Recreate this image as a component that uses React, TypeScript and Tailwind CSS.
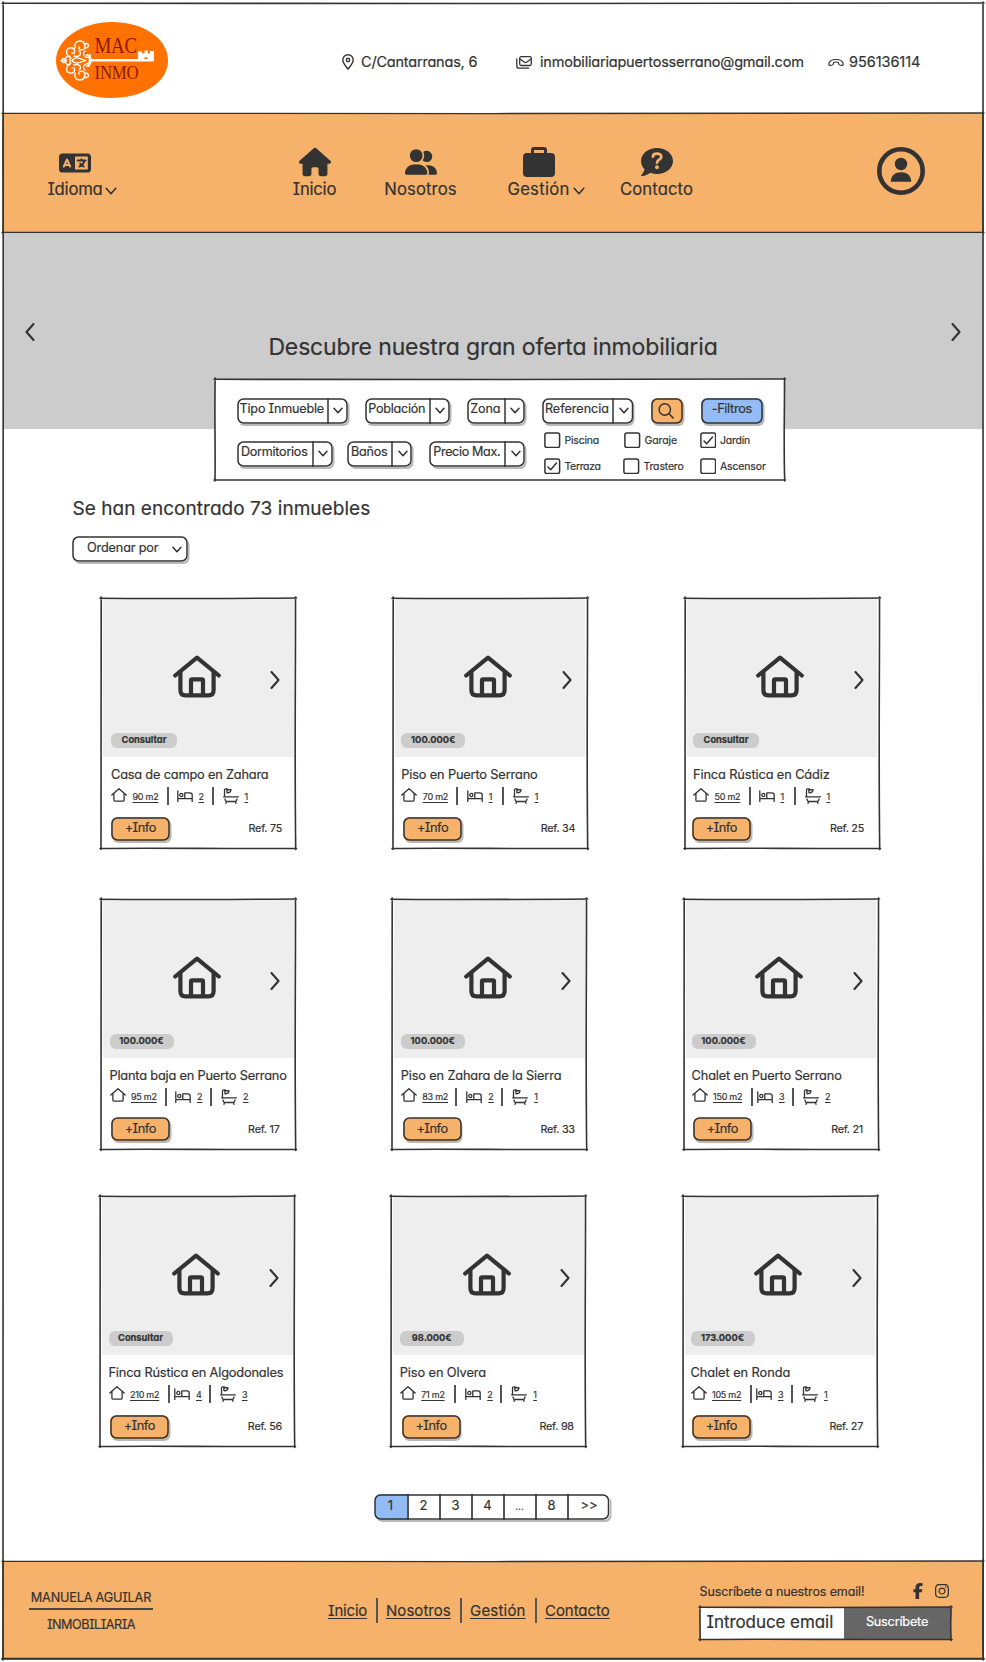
import type { ReactNode } from 'react';
import { FaFacebookF, FaHouse, FaInstagram, FaLanguage, FaUserGroup } from 'react-icons/fa6';

const INK = '#333333';

/* Hand-drawn rectangle: four slightly bowed strokes that overshoot the corners. */
function Sketch({ w, h, stroke = 1.6 }: { w: number; h: number; stroke?: number }) {
  const d = [
    `M-1 0.3 C${w * 0.3} 0.9 ${w * 0.7} 0.4 ${w + 1} 0`,
    `M${w} -1 C${w + 0.2} ${h * 0.3} ${w - 1} ${h * 0.6} ${w + 0.2} ${h + 1}`,
    `M-1 ${h} C${w * 0.25} ${h - 0.9} ${w * 0.6} ${h + 0.4} ${w + 1} ${h}`,
    `M0.2 -1 C-0.6 ${h * 0.35} 0.5 ${h * 0.7} 0 ${h + 1}`,
  ].join(' ');
  return (
    <svg
      className="pointer-events-none absolute inset-0 size-full overflow-visible"
      viewBox={`0 0 ${w} ${h}`}
      preserveAspectRatio="none"
      fill="none"
      stroke={INK}
      strokeWidth={stroke}
      strokeLinecap="round"
    >
      <path d={d} />
    </svg>
  );
}

/* Rounded pen outline laid over a control. */
function Outline() {
  return (
    <span className="pointer-events-none absolute inset-[0.75px]">
      <svg className="block size-full overflow-visible" fill="none" stroke={INK} strokeWidth="1.5">
        <rect width="100%" height="100%" rx="5.500" />
      </svg>
    </span>
  );
}

function Chevron({ className, dir = 'down', width = 1.5 }: { className: string; dir?: 'down' | 'left' | 'right'; width?: number }) {
  const paths = { down: 'M1 1 L5 5.6 L9 1', left: 'M8.5 1 L1.5 9 L8.5 17', right: 'M1.5 1 L8.5 9 L1.5 17' };
  return (
    <svg className={className} viewBox={dir === 'down' ? '0 0 10 6.6' : '0 0 10 18'} fill="none" stroke={INK} strokeWidth={width} strokeLinecap="round" strokeLinejoin="round">
      <path d={paths[dir]} />
    </svg>
  );
}

function Logo() {
  return (
    <svg className="mt-1 h-[76px] w-28 shrink-0 [-webkit-text-stroke:0px]" viewBox="0 0 112 76">
      <path d="M56 0 C88 0 112 17 112 38.500 C112 60 88 76 54 76 C24 76 0 59 0 38.500 C0 17 26 0 56 0Z" fill="#ff7100" />
      <g fill="none" stroke="#fff" strokeWidth="1.35" strokeLinecap="round">
        <circle cx="8" cy="38.500" r="2" />
        <path d="M5 38.500 H10 M10 36 C12 32 15 34 14 38.500 C15 43 12 45 10 41" />
        <path d="M15 36 C8 32 10 25 16 26 C20 27 19 33 16 31" />
        <path d="M15 41 C8 45 10 52 16 51 C20 50 19 44 16 46" />
        <path d="M19 26 C17 17 29 17 29 24 C29 29 22 29 23 25" />
        <path d="M19 51 C17 60 29 60 29 53 C29 48 22 48 23 52" />
        <path d="M28 22 C33 20 34 25 30 26 M28 55 C33 57 34 52 30 51" />
        <path d="M18 34 C24 36 26 31 23 29 M18 43 C24 41 26 46 23 48" />
        <path d="M29 29 C25 32 30 37 34 35 M29 48 C25 45 30 40 34 42" />
        <path d="M16 38.500 C20 33 26 38 30 38.500 C26 39 20 44 16 38.500Z" />
        <path d="M31 33 C36 34 36 43 31 44 M34 33 L33 44" strokeWidth="1.800" />
      </g>
      <path d="M34 37.100 L82 37.100 V29.500 H86 V31.500 H88.500 V28.500 H92 V31.500 H94 V29 H98 V39.500 H34 Z" fill="#fff" />
      <path d="M88 37 q2 -4 4 0z" fill="#ff7100" />
      <g fill="#8c1a06" fontFamily="'Liberation Serif', serif">
        <text x="38.500" y="31.300" fontSize="24" textLength="42.500" lengthAdjust="spacingAndGlyphs">MAC</text>
        <text x="38.500" y="56.700" fontSize="18.800" textLength="44" lengthAdjust="spacingAndGlyphs">INMO</text>
      </g>
    </svg>
  );
}

function PinIcon() {
  return (
    <svg className="h-4 w-3" viewBox="0 0 12 16" fill="none" stroke={INK} strokeWidth="1.4">
      <path d="M6 15.200 C4 12.500 .8 9 .8 6 A5.200 5.200 0 0 1 11.200 6 C11.200 9 8 12.500 6 15.200Z" strokeLinejoin="round" />
      <circle cx="6" cy="6" r="1.700" />
    </svg>
  );
}

function MailIcon() {
  return (
    <svg className="h-[13px] w-4" viewBox="0 0 16 13" fill="none" stroke={INK} strokeWidth="1.300" strokeLinecap="round" strokeLinejoin="round">
      <rect x="3.700" y=".7" width="11.600" height="8.800" rx="1.500" />
      <path d="M3.900 3 L8.500 6.300 Q9.500 7 10.500 6.300 L15.100 3" />
      <path d="M.8 2.800 V10 Q.8 12.200 3 12.200 H12.500" />
    </svg>
  );
}

function PhoneIcon() {
  return (
    <svg className="h-[9px] w-4" viewBox="0 0 16 9" fill="none" stroke={INK} strokeWidth="1.200" strokeLinejoin="round">
      <path d="M.9 5.300 C2.300 .2 13.700 .2 15.100 5.300 C15.500 6.700 14.900 7.600 13.700 7.400 L11.600 7 C10.400 6.700 10.600 5.300 10.400 4.500 C9 3.900 7 3.900 5.600 4.500 C5.400 5.300 5.600 6.700 4.400 7 L2.300 7.400 C1.100 7.600 .5 6.700 .9 5.300Z" />
    </svg>
  );
}

function SuitcaseIcon() {
  return (
    <svg className="h-[30px] w-8" viewBox="0 0 32 30" fill={INK}>
      <path d="M8 6 V3 A3 3 0 0 1 11 0 H21 A3 3 0 0 1 24 3 V6 H28 A4 4 0 0 1 32 10 V26 A4 4 0 0 1 28 30 H4 A4 4 0 0 1 0 26 V10 A4 4 0 0 1 4 6Z M11 6 H21 V3 H11Z" fillRule="evenodd" />
    </svg>
  );
}

function QuestionIcon() {
  return (
    <svg className="h-7 w-8" viewBox="0 32 512 448">
      <path fill={INK} d="M256 32C114.600 32 0 125.100 0 240c0 49.600 21.400 95 57 130.700C44.500 421.100 2.700 466 2.200 466.500c-2.200 2.300-2.800 5.700-1.500 8.700S4.800 480 8 480c66.300 0 116-31.800 140.600-51.400 32.700 12.300 69 19.400 107.400 19.400 141.400 0 256-93.100 256-208S397.400 32 256 32z" />
      <path d="M190 170 C195 105 330 110 325 175 C323 220 256 220 256 268" fill="none" stroke="#f6b26b" strokeWidth="44" strokeLinecap="round" />
      <circle cx="256" cy="340" r="31" fill="#f6b26b" />
    </svg>
  );
}

function AccountIcon() {
  return (
    <svg className="size-12" viewBox="0 0 48 48" fill={INK}>
      <circle cx="24" cy="24" r="21.700" fill="none" stroke={INK} strokeWidth="4.600" />
      <circle cx="24" cy="17" r="6.200" />
      <path d="M13.700 34.800 C14 28 18.500 25.200 24 25.200 S34 28 34.300 34.800Z" />
    </svg>
  );
}

function BigHouse() {
  return (
    <svg className="h-[43px] w-12" viewBox="0 0 48 43" fill="none" stroke={INK} strokeWidth="4.200" strokeLinecap="round" strokeLinejoin="round">
      <path d="M2.200 20.500 L24 2.600 L45.800 20.500" />
      <path d="M7.400 17.500 V35 Q7.400 40.400 12.500 40.400 H35.500 Q40.600 40.400 40.600 35 V17.500" />
      <path d="M18 40 V25.500 Q18 24.300 19.200 24.300 H28.800 Q30 24.300 30 25.500 V40" />
    </svg>
  );
}

function HouseIcon() {
  return (
    <svg className="-mt-[3px] h-[14px] w-4 shrink-0" viewBox="0 0 16 14" fill="none" stroke={INK} strokeWidth="1.300" strokeLinecap="round" strokeLinejoin="round">
      <path d="M.8 7 L8 .8 L15.200 7 M2.900 5.500 V12 Q2.900 13.200 4.100 13.200 H11.900 Q13.100 13.200 13.100 12 V5.500" />
    </svg>
  );
}

function BedIcon() {
  return (
    <svg className="h-3 w-4 shrink-0" viewBox="0 0 16 12" fill="none" stroke={INK} strokeWidth="1.300" strokeLinecap="round" strokeLinejoin="round">
      <path d="M.8 .8 V11.400 M.8 8.600 H15.200 V11.400 M15.200 8.600 V5 Q15.200 2.800 13 2.800 H7.800 V8.600" />
      <circle cx="4.300" cy="5" r="1.600" />
    </svg>
  );
}

function BathIcon() {
  return (
    <svg className="h-4 w-4 shrink-0" viewBox="0 0 16 16" fill="none" stroke={INK} strokeWidth="1.300" strokeLinecap="round" strokeLinejoin="round">
      <path d="M1.500 8.800 V2 Q1.500 .8 2.700 .8 H4 Q5 .8 5 2 M4 4.800 L3.800 1.800 L8 1.700 Q8 4.500 4 4.800Z M.6 8.800 H15.400 M2 11 Q2.200 13.500 4 13.500 H12 Q13.800 13.500 14 11 M3.500 13.800 L3 15.300 M12.500 13.800 L13 15.300" />
    </svg>
  );
}

function NavItem({ label, icon, caret, className }: { label: string; icon: ReactNode; caret?: boolean; className: string }) {
  return (
    <a className={`flex shrink-0 flex-col items-center text-[16.700px] ${className}`}>
      <span className="flex h-[30px] items-center justify-center">{icon}</span>
      <span className="relative mt-0.5 leading-[21px] whitespace-nowrap">
        {label}
        {caret && <Chevron className="absolute top-[8px] left-full ml-[3px] h-2 w-3" width={1.3} />}
      </span>
    </a>
  );
}

const boxed = 'relative rounded-[6px] shadow-[1.5px_2px_0_#b8b8b8]';

function Select({ label, className }: { label: string; className: string }) {
  return (
    <button className={`flex h-[25.500px] shrink-0 items-stretch bg-white text-[12.6px] ${boxed} ${className}`}>
      <span className="flex flex-1 items-center justify-center pb-[2px] leading-none whitespace-nowrap">{label}</span>
      <span className="flex w-[21px] items-center justify-center border-l-2 border-[#666]">
        <Chevron className="h-[7px] w-[10px]" />
      </span>
      <Outline />
    </button>
  );
}

function Check({ label, on, className }: { label: string; on?: boolean; className: string }) {
  return (
    <label className={`flex items-center gap-1 text-[10.5px] leading-4 ${className}`}>
      <svg className="size-[16.500px] shrink-0" viewBox="0 0 16.500 16.500" fill="none" stroke={INK} strokeWidth="1.500" strokeLinecap="round" strokeLinejoin="round">
        <rect x=".9" y=".9" width="14.700" height="14.700" rx="2" />
        {on && <path d="M4 9 L6.700 11.800 L12.500 5" />}
      </svg>
      <span className="pt-px">{label}</span>
    </label>
  );
}

type Home = {
  price: string;
  title: string;
  area: string;
  beds: number;
  baths: number;
  refNo: number;
  pad: string;
  badge: string;
  gap: string;
  info: string;
  refPad: string;
  tracking: string;
};

const rows: { className: string; homes: Home[] }[] = [
  {
    className: 'ml-[98px] w-[778px]',
    homes: [
      { price: 'Consultar', title: 'Casa de campo en Zahara', area: '90 m2', beds: 2, baths: 1, refNo: 75, pad: 'pl-[8px]', badge: 'w-[66px]', gap: 'mr-[8px]', info: '', refPad: 'pr-[13.500px]', tracking: 'tracking-[-0.2px]' },
      { price: '100.000€', title: 'Piso en Puerto Serrano', area: '70 m2', beds: 1, baths: 1, refNo: 34, pad: 'pl-[6.500px]', badge: 'w-[64px]', gap: 'mr-[9px]', info: 'ml-[2px]', refPad: 'pr-[12px]', tracking: 'tracking-[-0.16px]' },
      { price: 'Consultar', title: 'Finca Rústica en Cádiz', area: '50 m2', beds: 1, baths: 1, refNo: 25, pad: 'pl-[6.500px]', badge: 'w-[66px]', gap: 'mr-[8px]', info: '-ml-px', refPad: 'pr-[15px]', tracking: 'tracking-[-0.12px]' },
    ],
  },
  {
    className: 'ml-[98px] mt-[50px] w-[777px]',
    homes: [
      { price: '100.000€', title: 'Planta baja en Puerto Serrano', area: '95 m2', beds: 2, baths: 2, refNo: 17, pad: 'pl-[6.500px]', badge: 'w-[64px]', gap: 'mr-[8px]', info: 'ml-[1.500px]', refPad: 'pr-[16px]', tracking: 'tracking-[-0.2px]' },
      { price: '100.000€', title: 'Piso en Zahara de la Sierra', area: '83 m2', beds: 2, baths: 1, refNo: 33, pad: 'pl-[6.500px]', badge: 'w-[64px]', gap: 'mr-[9px]', info: 'ml-[2px]', refPad: 'pr-[12px]', tracking: 'tracking-[-0.16px]' },
      { price: '100.000€', title: 'Chalet en Puerto Serrano', area: '150 m2', beds: 3, baths: 2, refNo: 21, pad: 'pl-[6px]', badge: 'w-[64px]', gap: 'mr-[4px]', info: 'ml-[1.500px]', refPad: 'pr-[15px]', tracking: 'tracking-[-0.14px]' },
    ],
  },
  {
    className: 'ml-[97px] mt-[47px] w-[777px]',
    homes: [
      { price: 'Consultar', title: 'Finca Rústica en Algodonales', area: '210 m2', beds: 4, baths: 3, refNo: 56, pad: 'pl-[6.500px]', badge: 'w-[64px]', gap: 'mr-[4px]', info: 'ml-[1.500px]', refPad: 'pr-[12.500px]', tracking: 'tracking-[-0.18px]' },
      { price: '98.000€', title: 'Piso en Olvera', area: '71 m2', beds: 2, baths: 1, refNo: 98, pad: 'pl-[6.500px]', badge: 'w-[64px]', gap: 'mr-[9px]', info: 'ml-[2px]', refPad: 'pr-[12px]', tracking: 'tracking-[-0.1px]' },
      { price: '173.000€', title: 'Chalet en Ronda', area: '105 m2', beds: 3, baths: 1, refNo: 27, pad: 'pl-[6px]', badge: 'w-[64px]', gap: 'mr-[4px]', info: 'ml-[1.500px]', refPad: 'pr-[14px]', tracking: 'tracking-[-0.06px]' },
    ],
  },
];

function Card({ home }: { home: Home }) {
  return (
    <article className="relative flex h-[250.500px] w-[194.500px] flex-col">
      <div className={`mx-[2px] flex h-[159px] flex-col bg-[#eee] ${home.pad}`}>
        <div className="relative mt-[57px] -ml-[10px] flex h-[43px] items-center justify-center">
          <BigHouse />
          <Chevron className="absolute top-[16px] right-[13.500px] h-[18px] w-[10px]" dir="right" width={2.1} />
        </div>
        <span className={`mt-[35px] flex h-[15px] items-center justify-center rounded-[6px] bg-[#ccc] pb-px text-[9.300px] leading-none font-bold ${home.badge}`}>{home.price}</span>
      </div>
      <h3 className={`mt-[8px] ml-[2px] text-[12.800px] leading-[20px] whitespace-nowrap ${home.pad} ${home.tracking}`}>{home.title}</h3>
      <div className={`mt-[2px] ml-[2px] flex h-[18px] items-center text-[9px] leading-none ${home.pad}`}>
        <HouseIcon />
        <span className="ml-[5.500px] flex w-[44px] items-center justify-between tracking-[-0.25px]">
          <span className="underline underline-offset-2">{home.area}</span>
          <i className={`h-[18px] w-[2px] bg-[#555] ${home.gap}`} />
        </span>
        <BedIcon />
        <span className="ml-[6px] flex w-[24px] items-center justify-between">
          <span className="underline underline-offset-2">{home.beds}</span>
          <i className="mr-[9px] h-[18px] w-[2px] bg-[#555]" />
        </span>
        <BathIcon />
        <span className="ml-[6px] underline underline-offset-2">{home.baths}</span>
      </div>
      <div className={`mt-[12px] ml-[2px] flex items-center justify-between ${home.pad} ${home.refPad}`}>
        <button className={`flex h-[23.500px] w-[58.500px] items-center justify-center bg-[#f6b26b] text-[12.800px] leading-none tracking-[-0.5px] ${boxed} ${home.info}`}>
          +Info
          <Outline />
        </button>
        <span className="pt-[2px] text-[10.800px] leading-none tracking-[-0.250px]">Ref. {home.refNo}</span>
      </div>
      <Sketch w={194.5} h={250.5} />
    </article>
  );
}

const pages = ['1', '2', '3', '4', '...', '8', '>>'];

export default function App() {
  return (
    <div className="relative h-[1662px] w-[986px] overflow-hidden bg-white px-[3px] pt-[3px] font-['Inter',sans-serif] text-[#333] [-webkit-text-stroke:0.2px] [font-feature-settings:'cv08','cv11']">
      <header className="flex h-[110px] items-center pl-[53px] text-[14.500px] tracking-[-0.200px]">
        <Logo />
        <div className="ml-[174px] flex items-center gap-2 pt-[8px] leading-none">
          <PinIcon />
          <span className="-ml-px w-[147px] whitespace-nowrap">C/Cantarranas, 6</span>
          <MailIcon />
          <span className="w-[280px] whitespace-nowrap">inmobiliariapuertosserrano@gmail.com</span>
          <PhoneIcon />
          <span className="-ml-[3px] tracking-[-0.050px]">956136114</span>
        </div>
      </header>

      <nav className="relative flex h-[119.500px] bg-[#f6b26b] pt-[34px] pl-[45px]">
        <NavItem label="Idioma" caret className="w-[54px] tracking-[-0.250px]" icon={<FaLanguage className="mt-[2px] size-8" />} />
        <div className="ml-[190.500px] flex">
          <NavItem label="Inicio" className="w-[44px] tracking-[-0.250px]" icon={<FaHouse className="size-8" />} />
          <NavItem label="Nosotros" className="ml-[47.500px] w-[73px] tracking-[0.100px]" icon={<FaUserGroup className="size-8" />} />
          <NavItem label="Gestión" caret className="ml-[49.500px] w-[64px] tracking-[0.250px]" icon={<SuitcaseIcon />} />
          <NavItem label="Contacto" className="ml-[49.500px] w-[73px] tracking-[0.100px]" icon={<QuestionIcon />} />
        </div>
        <div className="ml-[184px]">
          <AccountIcon />
        </div>
        <Sketch w={980} h={119.5} stroke={1.3} />
      </nav>

      <section className="relative h-[196.500px] bg-[#ccc]">
        <h1 className="pt-[98px] text-center text-[23px] leading-[32px] tracking-[-0.150px]">Descubre nuestra gran oferta inmobiliaria</h1>
        <Chevron className="absolute top-[90px] left-[22px] h-[18px] w-[10px]" dir="left" width={2.1} />
        <Chevron className="absolute top-[90px] right-[22px] h-[18px] w-[10px]" dir="right" width={2.1} />
      </section>

      <form className="relative -mt-[50px] ml-[212px] h-[101px] w-[569.500px] bg-white pt-[19px] pl-[22px]">
        <div className="flex">
          <Select label="Tipo Inmueble" className="w-[110.500px] tracking-[-0.200px]" />
          <Select label="Población" className="ml-[17.500px] w-[84.500px] tracking-[-0.250px]" />
          <Select label="Zona" className="ml-[17.500px] w-[57.500px] tracking-[-0.200px]" />
          <Select label="Referencia" className="ml-[17.500px] w-[91px] tracking-[0px]" />
          <button className={`ml-[18px] flex w-[31.500px] items-center justify-center bg-[#f6b26b] ${boxed}`}>
            <svg className="size-4 -translate-x-px" viewBox="0 0 16 16" fill="none" stroke={INK} strokeWidth="1.500" strokeLinecap="round">
              <circle cx="6.800" cy="6.500" r="5.700" />
              <path d="M11 10.700 L15.200 15" />
            </svg>
            <Outline />
          </button>
          <button className={`ml-[18.500px] flex w-[61.500px] items-center justify-center bg-[#93bbf4] pb-[2px] text-[12.800px] leading-none tracking-[-0.350px] ${boxed}`}>
            -Filtros
            <Outline />
          </button>
        </div>
        <div className="mt-[8px] flex">
          <div className="mt-[9.500px] flex">
            <Select label="Dormitorios" className="w-[95.500px] tracking-[-0.250px]" />
            <Select label="Baños" className="ml-[15px] w-[64.500px] tracking-[-0.250px]" />
            <Select label="Precio Max." className="ml-[17.500px] w-[95.500px] tracking-[-0.350px]" />
          </div>
          <div className="ml-[19px] grid grid-cols-[80px_75.500px_66px] content-start gap-y-[9px]">
            <Check label="Piscina" className="tracking-[-0.200px]" />
            <Check label="Garaje" className="tracking-[-0.100px]" />
            <Check label="Jardín" on className="tracking-[-0.220px]" />
            <Check label="Terraza" on className="tracking-[-0.350px]" />
            <Check label="Trastero" className="-ml-px tracking-[-0.170px]" />
            <Check label="Ascensor" className="tracking-[-0.150px]" />
          </div>
        </div>
        <Sketch w={569.5} h={101} />
      </form>

      <main>
        <h2 className="mt-[17px] ml-[69.500px] text-[19px] leading-6 tracking-[0.040px]">Se han encontrado 73 inmuebles</h2>
        <button className={`mt-[15.500px] ml-[69.500px] flex h-[25.500px] w-[115.500px] items-center justify-between bg-white pr-[6px] pb-px pl-[14.500px] text-[12.700px] leading-none tracking-[-0.160px] ${boxed}`}>
          Ordenar por
          <Chevron className="mt-0.5 h-[7px] w-[10px]" />
          <Outline />
        </button>
        <div className="mt-[36px]">
          {rows.map((row) => (
            <div key={row.className} className={`flex justify-between ${row.className}`}>
              {row.homes.map((home) => (
                <Card key={home.refNo} home={home} />
              ))}
            </div>
          ))}
        </div>
        <div className={`mt-[47.500px] ml-[371.500px] h-[25.500px] w-[235px] bg-white text-[13px] ${boxed}`}>
          <div className="flex size-full overflow-hidden rounded-[6px]">
            {pages.map((page, i) => (
              <span
                key={page}
                className={`flex items-center justify-center pb-[2px] leading-none ${i === 0 ? 'w-8 bg-[#93bbf4]' : i === 6 ? 'flex-1 border-l-2 border-[#555]' : 'w-8 border-l-2 border-[#555]'} ${page === '...' ? 'text-[10px]' : ''}`}
              >
                {page}
              </span>
            ))}
          </div>
          <Outline />
        </div>
      </main>

      <footer className="relative mt-[41px] flex h-[97.500px] bg-[#f6b26b]">
        <div className="mt-[26.500px] ml-[26px] flex w-[124px] flex-col items-center text-[12.700px] whitespace-nowrap">
          <span className="leading-[21px] tracking-[-0.200px]">MANUELA AGUILAR</span>
          <i className="h-[2px] w-full bg-[#444]" />
          <span className="mt-[4px] leading-[21px] tracking-[-0.500px]">INMOBILIARIA</span>
        </div>
        <div className="mt-[37px] ml-[175px] flex h-[25px] items-center text-[15px] leading-none">
          <a className="w-[39px] tracking-[-0.200px] underline decoration-1 underline-offset-2">Inicio</a>
          <i className="mr-[8.500px] ml-[8.500px] h-[25px] w-[2px] bg-[#555]" />
          <a className="w-[65.500px] tracking-[0.050px] underline decoration-1 underline-offset-2">Nosotros</a>
          <i className="mr-[8px] ml-[8.500px] h-[25px] w-[2px] bg-[#555]" />
          <a className="w-[56.500px] tracking-[0.200px] underline decoration-1 underline-offset-2">Gestión</a>
          <i className="mr-[8px] ml-[8.500px] h-[25px] w-[2px] bg-[#555]" />
          <a className="tracking-[-0.050px] underline decoration-1 underline-offset-2">Contacto</a>
        </div>
        <div className="mt-[21px] ml-auto mr-[32.500px] w-[251px]">
          <div className="flex h-[18px] items-center">
            <span className="mt-[4px] flex-1 text-[12.500px] leading-none tracking-[-0.120px]">Suscríbete a nuestros email!</span>
            <FaFacebookF className="mr-[8px] size-4" />
            <FaInstagram className="mr-px size-4" />
          </div>
          <div className="relative mt-[7px] flex h-[32.500px] bg-white">
            <span className="flex w-[144px] items-center pl-[7px] text-[17px] leading-none tracking-[-0.070px]">Introduce email</span>
            <button className="flex flex-1 items-center justify-center bg-[#666] text-[12.700px] leading-none tracking-[-0.200px] text-white">Suscríbete</button>
            <Sketch w={251} h={32.5} />
          </div>
        </div>
        <Sketch w={980} h={97.5} stroke={1.3} />
      </footer>
      <div className="pointer-events-none absolute top-[3px] left-[3px] h-[1656px] w-[980px]">
        <Sketch w={980} h={1656} />
      </div>
    </div>
  );
}
